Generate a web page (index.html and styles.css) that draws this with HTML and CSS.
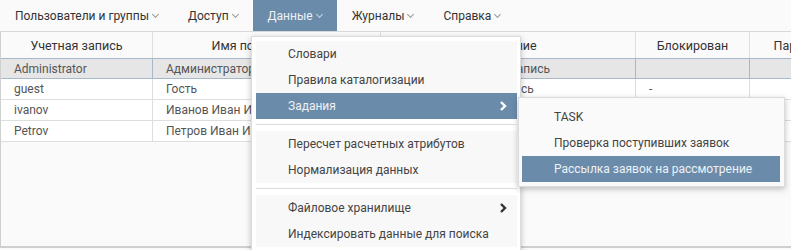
FILE: index.html
```html
<!DOCTYPE html>
<html lang="ru">
<head>
<meta charset="utf-8">
<link rel="stylesheet" href="styles.css">
</head>
<body>
<nav class="menubar">
  <div class="mi">Пользователи и группы<span class="caret"></span></div>
  <div class="mi">Доступ<span class="caret"></span></div>
  <div class="mi active">Данные<span class="caret"></span></div>
  <div class="mi">Журналы<span class="caret"></span></div>
  <div class="mi">Справка<span class="caret"></span></div>
</nav>

<div class="grid">
  <div class="row head">
    <div class="c c1">Учетная запись</div>
    <div class="c c2">Имя пользователя</div>
    <div class="c c3">Описание</div>
    <div class="c c4">Блокирован</div>
    <div class="c c5">Пароль</div>
  </div>
  <div class="row sel">
    <div class="c c1">Administrator</div>
    <div class="c c2">Администратор</div>
    <div class="c c3">Встроенная учетная запись</div>
    <div class="c c4"></div>
    <div class="c c5"></div>
  </div>
  <div class="row">
    <div class="c c1">guest</div>
    <div class="c c2">Гость</div>
    <div class="c c3">Гостевая учетная запись</div>
    <div class="c c4">-</div>
    <div class="c c5"></div>
  </div>
  <div class="row">
    <div class="c c1">ivanov</div>
    <div class="c c2">Иванов Иван Иванович</div>
    <div class="c c3"></div>
    <div class="c c4"></div>
    <div class="c c5"></div>
  </div>
  <div class="row">
    <div class="c c1">Petrov</div>
    <div class="c c2">Петров Иван Иванович</div>
    <div class="c c3"></div>
    <div class="c c4"></div>
    <div class="c c5"></div>
  </div>
  <div class="empty"></div>
</div>

<div class="dropdown">
  <div class="grp">
    <div class="item">Словари</div>
    <div class="item">Правила каталогизации</div>
    <div class="item active has-sub">Задания
      <svg class="chev" width="10" height="12" viewBox="0 0 10 12"><path d="M3 2 L7 6 L3 10" fill="none" stroke="currentColor" stroke-width="2.4"/></svg>
      <div class="submenu">
        <div class="item">TASK</div>
        <div class="item">Проверка поступивших заявок</div>
        <div class="item active">Рассылка заявок на рассмотрение</div>
      </div>
    </div>
  </div>
  <div class="sep"></div>
  <div class="grp">
    <div class="item">Пересчет расчетных атрибутов</div>
    <div class="item">Нормализация данных</div>
  </div>
  <div class="sep"></div>
  <div class="grp">
    <div class="item">Файловое хранилище
      <svg class="chev" width="10" height="12" viewBox="0 0 10 12"><path d="M3 2 L7 6 L3 10" fill="none" stroke="currentColor" stroke-width="2.4"/></svg>
    </div>
    <div class="item">Индексировать данные для поиска</div>
  </div>
</div>
</body>
</html>
```
FILE: styles.css
```css
* { box-sizing: border-box; }
html, body { margin: 0; padding: 0; }
body {
  width: 791px;
  height: 250px;
  overflow: hidden;
  background: #fafafa;
  font-family: Roboto, "Noto Sans", sans-serif;
  font-size: 12px;
  color: #333;
  position: relative;
}
.menubar {
  display: flex;
  height: 31px;
  background: #fafafa;
}
.mi {
  display: flex;
  align-items: center;
  padding: 0 15px;
  color: #333;
  white-space: nowrap;
}
.mi.active {
  background: #6b8bab;
  color: #eef2f6;
}
.caret {
  display: inline-block;
  width: 5px;
  height: 5px;
  border-right: 1px solid #999;
  border-bottom: 1px solid #999;
  transform: rotate(45deg);
  margin: -3px 0 0 4px;
}
.mi.active .caret { border-color: #c9d5e1; }

.grid {
  border-top: 1px solid #d9d9d9;
  border-left: 1px solid #d0d0d0;
  border-bottom: 2px solid #cfcfcf;
  height: 217px;
  display: flex;
  flex-direction: column;
  overflow: hidden;
}
.row {
  display: grid;
  grid-template-columns: 152px 228px 255px 114px 92px;
  height: 21px;
  background: #fff;
  border-bottom: 1px solid #dedede;
  color: #555;
}
.c {
  padding: 0 0 0 13px;
  display: flex;
  align-items: center;
  white-space: nowrap;
  overflow: hidden;
  border-right: 1px solid #dedede;
}
.head {
  height: 26px;
  background: #fafafa;
  border-bottom: none;
  color: #333;
}
.head .c { justify-content: center; padding: 0; font-size: 12.5px; }
.sel {
  background: #e6e6e6;
  border-top: 1px solid #a7b8ca;
  border-bottom: 1px solid #a7b8ca;
}
.sel .c { border-right-color: #a7b8ca; }
.empty { flex: 1; background: #fafafa; }

.dropdown {
  position: absolute;
  left: 251px;
  top: 36px;
  width: 270px;
  padding: 4px 3px 4px 4px;
  background: #fff;
  border: 1px solid #dcdcdc;
  box-shadow: 0 2px 6px rgba(0,0,0,0.25);
  color: #444;
}
.grp { background: #f8f8f8; }
.sep {
  height: 12px;
  position: relative;
}
.sep::after {
  content: "";
  position: absolute;
  left: 0; right: 0; top: 5px;
  height: 1px;
  background: #dcdcdc;
}
.item {
  height: 26px;
  display: flex;
  align-items: center;
  padding-left: 32px;
  white-space: nowrap;
  position: relative;
}
.item.active {
  background: #6b8bab;
  color: #eef2f6;
}
.chev {
  position: absolute;
  right: 9px;
  top: 7px;
  color: #333;
}
.item.active .chev { color: #fff; }
.submenu {
  position: absolute;
  left: 262px;
  top: 4px;
  width: 267px;
  padding: 6px 4px 4px 3px;
  background: #fafafa;
  border: 1px solid #dcdcdc;
  box-shadow: 0 2px 6px rgba(0,0,0,0.25);
  color: #444;
}
```
